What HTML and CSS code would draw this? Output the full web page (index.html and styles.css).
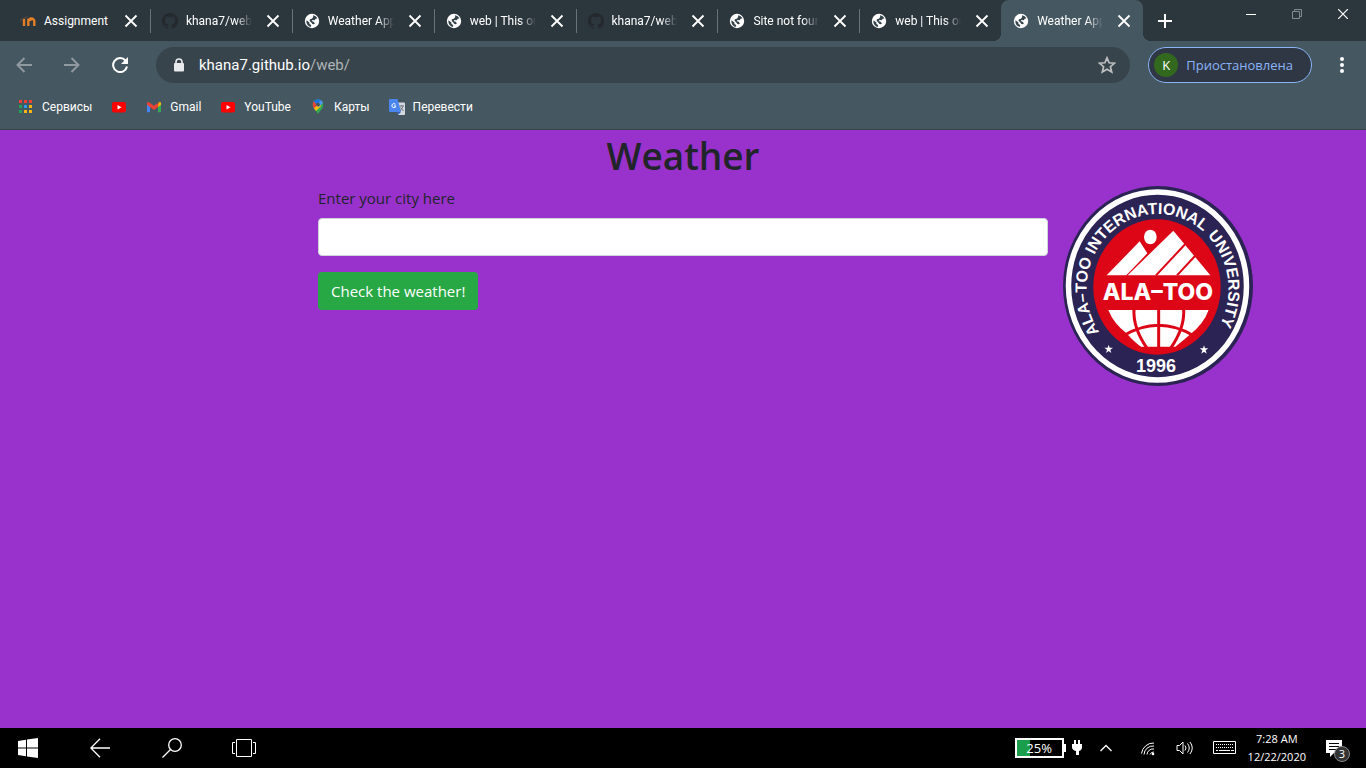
FILE: index.html
```html
<!DOCTYPE html>
<html lang="en">
<head>
<meta charset="utf-8">
<title>Weather App</title>
<link rel="stylesheet" href="styles.css">
</head>
<body>
<svg class="defs" aria-hidden="true">
  <symbol id="globe" viewBox="0 0 16 16"><circle cx="8" cy="8" r="7.200" fill="#fff"/><path class="globe-land" d="M2.500 7.200L5.400 9.600V11l1.700 1v1.800C4 13.500 1.900 10.800 2.500 7.200zM9 2.300c2 .3 3.600 1.500 4.300 3.200l-1.600.3-1 1.500-2.200-.3-.8 1 1.900.7 1.300 1.500-.9 1-1.600-.1L7.300 9.500 5.600 7.800 5.900 6.200l2-.5L9.200 4z"/></symbol>
  <symbol id="github" viewBox="0 0 16 16"><path fill="#24292e" d="M8 0C3.580 0 0 3.580 0 8c0 3.540 2.290 6.530 5.470 7.590.4.070.55-.17.55-.38v-1.340c-2.230.48-2.690-1.070-2.690-1.070-.36-.92-.89-1.170-.89-1.170-.73-.5.060-.49.060-.49.8.060 1.230.83 1.230.83.71 1.220 1.870.87 2.330.66.070-.52.280-.87.510-1.070-1.780-.2-3.640-.89-3.640-3.950 0-.87.310-1.590.82-2.150-.08-.2-.36-1.020.080-2.120 0 0 .67-.21 2.200.82a7.600 7.600 0 0 1 4 0c1.530-1.040 2.200-.82 2.200-.82.44 1.100.16 1.920.08 2.120.51.560.82 1.270.82 2.150 0 3.070-1.870 3.750-3.650 3.950.29.250.54.730.54 1.480v2.190c0 .21.15.46.55.38A8 8 0 0 0 16 8c0-4.420-3.580-8-8-8z"/></symbol>
  <symbol id="close" viewBox="0 0 14 14"><path d="M1.500 1.500l11 11m0-11l-11 11" stroke="#fff" stroke-width="1.800" fill="none"/></symbol>
  <symbol id="youtube" viewBox="0 0 16 16"><rect x="1" y="3" width="14" height="10.500" rx="2.200" fill="#f00"/><path d="M6.500 6v4.500l4-2.250z" fill="#fff"/></symbol>
</svg>

<header class="browser">
  <div class="tab-strip">
    <ul class="tabs">
      <li class="tab"><svg class="favicon" viewBox="0 0 16 16"><path d="M4 5.500V13M8.300 13V8.300a1.800 1.800 0 0 1 3.200-.8M8.300 5.800V13M8.300 8.500a3 3 0 0 1 6 0V13" fill="none" stroke="#e57f26" stroke-width="2.400"/><path d="M0 6l7-3 1 1.500-4 1.500-2 .2-1 3.300z" fill="#4a4544"/></svg><a class="tab-title" href="#">Assignment</a><button class="tab-close" aria-label="Close tab"><svg><use href="#close"/></svg></button></li>
      <li class="tab"><svg class="favicon"><use href="#github"/></svg><a class="tab-title" href="#">khana7/web: w</a><button class="tab-close" aria-label="Close tab"><svg><use href="#close"/></svg></button></li>
      <li class="tab"><svg class="favicon"><use href="#globe"/></svg><a class="tab-title" href="#">Weather App</a><button class="tab-close" aria-label="Close tab"><svg><use href="#close"/></svg></button></li>
      <li class="tab"><svg class="favicon"><use href="#globe"/></svg><a class="tab-title" href="#">web | This out</a><button class="tab-close" aria-label="Close tab"><svg><use href="#close"/></svg></button></li>
      <li class="tab"><svg class="favicon"><use href="#github"/></svg><a class="tab-title" href="#">khana7/web: w</a><button class="tab-close" aria-label="Close tab"><svg><use href="#close"/></svg></button></li>
      <li class="tab"><svg class="favicon"><use href="#globe"/></svg><a class="tab-title" href="#">Site not found</a><button class="tab-close" aria-label="Close tab"><svg><use href="#close"/></svg></button></li>
      <li class="tab"><svg class="favicon"><use href="#globe"/></svg><a class="tab-title" href="#">web | This out</a><button class="tab-close" aria-label="Close tab"><svg><use href="#close"/></svg></button></li>
      <li class="tab active"><svg class="favicon"><use href="#globe"/></svg><a class="tab-title" href="#">Weather App</a><button class="tab-close" aria-label="Close tab"><svg><use href="#close"/></svg></button></li>
    </ul>
    <button class="new-tab" aria-label="New tab"><svg width="14" height="14" viewBox="0 0 14 14"><path d="M7 0v14M0 7h14" stroke="#fff" stroke-width="2"/></svg></button>
    <div class="window-controls">
      <button aria-label="Minimize"><svg width="10" height="10"><path d="M0 5.500h10" stroke="#fff"/></svg></button>
      <button aria-label="Restore"><svg width="10" height="10" fill="none" stroke="#808a90"><path d="M.5 2.500h7v7h-7zM2.500 2.500v-2h7v7h-2"/></svg></button>
      <button aria-label="Close"><svg width="10" height="10"><path d="M0 0l10 10M10 0L0 10" stroke="#fff" stroke-width="1.200"/></svg></button>
    </div>
  </div>

  <div class="toolbar">
    <button class="nav-button" aria-label="Back"><svg width="16" height="16" viewBox="0 0 16 16"><path d="M16 8H1.500M8.500 1L1.500 8l7 7" fill="none" stroke="#8f999f" stroke-width="2"/></svg></button>
    <button class="nav-button" aria-label="Forward"><svg width="16" height="16" viewBox="0 0 16 16"><path d="M0 8h14.500M7.500 1l7 7-7 7" fill="none" stroke="#8f999f" stroke-width="2"/></svg></button>
    <button class="nav-button" aria-label="Reload"><svg width="16" height="16" viewBox="0 0 16 16"><path d="M13.500 3.500A7 7 0 1 0 15 9.500" fill="none" stroke="#fff" stroke-width="2"/><path d="M16 0v7H9z" fill="#fff"/></svg></button>
    <div class="address">
      <svg width="12" height="14" viewBox="0 0 12 14"><path d="M3 6V4a3 3 0 0 1 6 0v2" fill="none" stroke="#e8eaed" stroke-width="1.600"/><rect x="1" y="5" width="10" height="8.500" rx="1" fill="#e8eaed"/></svg>
      <a class="url" href="#">khana7.github.io<span>/web/</span></a>
      <button aria-label="Bookmark this tab"><svg width="18" height="18" viewBox="0 0 18 18"><path d="M9 1.800l2.100 5 5.400.4-4.100 3.500 1.300 5.300L9 13.200 4.300 16l1.300-5.300L1.500 7.200l5.400-.4z" fill="none" stroke="#bdbfc1" stroke-width="1.700"/></svg></button>
    </div>
    <button class="profile"><span class="avatar">K</span>Приостановлена</button>
    <button class="menu-button" aria-label="Menu"><svg width="6" height="16" fill="#fff"><circle cx="3" cy="2" r="2"/><circle cx="3" cy="8" r="2"/><circle cx="3" cy="14" r="2"/></svg></button>
  </div>

  <nav class="bookmarks">
    <a href="#"><svg viewBox="0 0 16 16"><g fill="#f04134"><path d="M1 1h3v3H1zM6 1h3v3H6zM11 1h3v3h-3z"/></g><path d="M1 6h3v3H1zM1 11h3v3H1z" fill="#25a25a"/><path d="M6 6h3v3H6z" fill="#2d9fea"/><path d="M11 6h3v3h-3zM6 11h3v3H6zM11 11h3v3h-3z" fill="#fbb70d"/></svg>Сервисы</a>
    <a href="#" aria-label="YouTube"><svg><use href="#youtube"/></svg></a>
    <a href="#"><svg viewBox="0 0 16 16"><path d="M1 4v8.500q0 .8.800.8H4V7z" fill="#4285f4"/><path d="M15 4v8.500q0 .8-.8.800H12V7z" fill="#34a853"/><path d="M12 4.300L13 3.200q2-.8 2 1.200v1.300L12 8z" fill="#fbbc04"/><path d="M1 5.700V4.400q0-2 2-1.200l5 3.600 5-3.600-1 4.800-4 3-4-3z" fill="#ea4335"/></svg>Gmail</a>
    <a href="#"><svg><use href="#youtube"/></svg>YouTube</a>
    <a href="#"><svg viewBox="0 0 16 16"><path d="M8 15.500c-.5-3-5.300-5-5.300-10A5.300 5.300 0 0 1 8 .3a5.300 5.300 0 0 1 5.300 5.200c0 5-4.800 7-5.300 10z" fill="#34a853"/><path d="M3.800 2.300L7.700 5.500 4.300 9.800Q2.700 7.800 2.700 5.300 2.800 3.600 3.800 2.300z" fill="#ea4335"/><path d="M4 9.500L9.500 3.500 11 7 6 12z" fill="#fbbc04"/><path d="M3.800 2.300Q7-1.300 11 1.200L7 6z" fill="#1a73e8"/><path d="M11 1.200q1.600 1 2 2.600L8.500 8 7 5.500z" fill="#4f90f5"/><circle cx="8" cy="5.500" r="1.900" fill="#455760"/></svg>Карты</a>
    <a href="#"><svg viewBox="0 0 16 16"><path d="M8 3.500h7.200q.8 0 .8.800v11q0 .7-.8.700H9z" fill="#d5d9df"/><path d="M0 1q0-1 1-1h7.500l3.600 13H1q-1 0-1-1z" fill="#4a86ee"/><path d="M8 13h4l-3 3z" fill="#3362bf"/><path d="M10.500 7h4.500M12.700 6v1M14 7.500q-.8 2.500-3 4M11.500 8.500l3 3.500" stroke="#637078" fill="none"/><path d="M6.400 5.300a2 2 0 1 0 .5 1.700H5" fill="none" stroke="#fff"/></svg>Перевести</a>
  </nav>
</header>

<main class="page">
  <div class="container">
    <h1>Weather</h1>
    <div class="row">
      <form class="weather-form">
        <label for="city">Enter your city here</label>
        <input id="city" type="text">
        <button type="button">Check the weather!</button>
      </form>
      <svg class="logo" viewBox="0 0 190 200" role="img" aria-label="Ala-Too International University">
        <defs><path id="ring-path" d="M37 147A71 75 0 1 1 152 147"/></defs>
        <ellipse cx="95" cy="100" rx="95" ry="100" fill="#2a2354"/>
        <ellipse cx="94.500" cy="100" rx="89" ry="94" fill="none" stroke="#fff" stroke-width="5.500"/>
        <ellipse cx="94" cy="101" rx="63.700" ry="67.700" fill="#dc0616"/>
        <g class="ring-text">
          <text><textPath href="#ring-path" startOffset="1">ALA–TOO INTERNATIONAL</textPath></text>
          <text><textPath href="#ring-path" startOffset="217">UNIVERSITY</textPath></text>
        </g>
        <g transform="translate(-8 -6) scale(.33333)" fill="#fff">
          <ellipse cx="286" cy="171" rx="19" ry="22"/>
          <path d="M155 286L254 184l23 36-63 66zM218 286L355 152l111 134z"/>
          <path d="M303 286l88-94M366 286l54-58" stroke="#dc0616" stroke-width="6"/>
          <path d="M160 390h301q-14 40-55 73-20 18-45 37H258q-20-14-42-39-40-30-56-71z"/>
          <path d="M237 386q-4 58 40 120M386 386q4 58-40 120M311 386v118M204 468q107-64 213 0" fill="none" stroke="#dc0616" stroke-width="9"/>
          <path d="M161 494l3 9h10l-8 6 3 10-8-6-8 6 3-10-8-6h10zM447 496l3 9h10l-8 6 3 10-8-6-8 6 3-10-8-6h10z"/>
        </g>
        <text class="logo-name" x="95" y="114">ALA–TOO</text>
        <text class="logo-year" x="93" y="186">1996</text>
      </svg>
    </div>
  </div>
</main>

<footer class="taskbar">
  <div class="task-buttons">
    <button aria-label="Start"><svg width="20" height="20" fill="#fff"><path d="M0 3l8-1.200V9.500H0zM9 1.600L20 0v9.500H9zM0 10.500h8v7.700L0 17zM9 10.500h11V20L9 18.400z"/></svg></button>
    <button aria-label="Back"><svg width="20" height="20" fill="none" stroke="#fff" stroke-width="1.300"><path d="M20 10H1M10 .8L.8 10l9.200 9.200"/></svg></button>
    <button aria-label="Search"><svg width="20" height="20" fill="none" stroke="#fff" stroke-width="1.300"><circle cx="13" cy="7" r="6.300"/><path d="M8.500 11.500L.5 19.500"/></svg></button>
    <button aria-label="Task view"><svg width="24" height="20" fill="none" stroke="#fff"><path d="M4.500 1.500h15v17h-15zM3 4.500H.5v11H3M21 4.500h2.500v11H21"/></svg></button>
  </div>
  <div class="tray">
    <div class="battery">25%</div>
    <svg class="plug" width="10" height="16" fill="#fff"><path d="M2 0h2v4h2V0h2v4h2v3q0 3-3 4v4H4v-4Q0 10 0 7V4h2z"/></svg>
    <button class="chevron" aria-label="Show hidden icons"><svg width="12" height="8" fill="none" stroke="#fff" stroke-width="1.300"><path d="M.5 7L6 1.500 11.500 7"/></svg></button>
    <button aria-label="Network"><svg width="14" height="16" fill="none" stroke="#fff"><path d="M.5 13.500A12 12 0 0 1 13 3M3 14.500A9 9 0 0 1 13 6M6 14.500A6 6 0 0 1 13 9M9 14.500A4 4 0 0 1 13 12"/><circle cx="12" cy="14" r="1.300" fill="#fff" stroke="none"/></svg></button>
    <button aria-label="Volume"><svg width="18" height="16" fill="none" stroke="#fff"><path d="M2 5.500h2.500l3.500-3.500v12L4.500 10.500H2zM10 5.500q2 2.500 0 5M12.500 3.500q3.500 4.500 0 9M15 2q4.500 6 0 12"/></svg></button>
    <button aria-label="Touch keyboard"><svg width="24" height="14" fill="none" stroke="#fff"><path d="M.5.5h22v12H.5z"/><path d="M3 3.500h18M3 6.500h18" stroke-dasharray="1 1"/><path d="M3 9.500h2m1 0h11m1 0h3"/></svg></button>
    <time class="clock" datetime="2020-12-22T07:28">7:28 AM<br>12/22/2020</time>
    <button class="notifications" aria-label="Notifications"><svg width="16" height="17" fill="#fff"><path d="M0 0h16v13h-8l-4 4v-4H0z"/><path d="M3 3.500h10M3 6.500h10M3 9.500h7" stroke="#000"/></svg><span class="badge">3</span></button>
  </div>
</footer>
</body>
</html>
```
FILE: styles.css
```css
* {
  box-sizing: border-box;
}

body {
  margin: 0;
  min-height: 100vh;
  display: flex;
  flex-direction: column;
  font-family: "Open Sans", "Noto Sans", sans-serif;
  background: #9932cc;
}

button {
  padding: 0;
  border: 0;
  background: none;
  color: inherit;
  font: inherit;
}

a {
  color: inherit;
  text-decoration: none;
}

svg {
  flex: none;
  display: block;
}

.defs {
  position: absolute;
  width: 0;
  height: 0;
}

/* Browser chrome */
.browser {
  background: #455760;
  border-bottom: 1px solid #38444b;
  color: #fff;
  font-family: Roboto, "Noto Sans", sans-serif;
  font-size: 12px;
}

.tab-strip {
  display: flex;
  height: 41px;
  padding-left: 8px;
  background: #2c373d;
}

.tabs {
  display: flex;
  flex: 0 1 1135px;
  min-width: 0;
  margin: 0;
  padding: 0;
  list-style: none;
}

.tab {
  display: flex;
  flex: 1 1 0;
  min-width: 0;
  align-items: center;
  padding: 0 12px;
}

.tab + .tab:not(.active) {
  background: linear-gradient(#66737a, #66737a) left center / 1px 24px no-repeat;
}

.favicon {
  width: 16px;
  height: 16px;
  margin-right: 8px;
}

.globe-land {
  fill: #344249;
}

.tab-title {
  flex: 1;
  min-width: 0;
  margin-right: 14px;
  overflow: hidden;
  white-space: nowrap;
  mask-image: linear-gradient(to right, #000 75%, transparent);
}

.tab:first-child .tab-title {
  mask-image: none;
}

.tab-close svg {
  width: 14px;
  height: 14px;
}

.tab.active {
  position: relative;
  background: #455760;
  border-radius: 8px 8px 0 0;
}

.tab.active::before,
.tab.active::after {
  content: "";
  position: absolute;
  bottom: 0;
  width: 8px;
  height: 8px;
}

.tab.active::before {
  right: 100%;
  background: radial-gradient(circle at 0 0, transparent 8px, #455760 8px);
}

.tab.active::after {
  left: 100%;
  background: radial-gradient(circle at 100% 0, transparent 8px, #455760 8px);
}

.new-tab {
  display: grid;
  place-items: center;
  width: 44px;
}

.window-controls {
  display: flex;
  height: 28px;
  margin-left: auto;
}

.window-controls button {
  display: grid;
  place-items: center;
  width: 46px;
}

.toolbar {
  display: flex;
  align-items: center;
  height: 48px;
}

.nav-button {
  display: grid;
  place-items: center;
  width: 48px;
  height: 36px;
}

.address {
  display: flex;
  flex: 1;
  align-items: center;
  height: 36px;
  margin-left: 12px;
  padding: 0 14px 0 17px;
  border-radius: 18px;
  background: #38444b;
  font-size: 15px;
}

.url {
  flex: 1;
  margin-left: 14px;
}

.url span {
  color: #aeb4b7;
}

.profile {
  display: flex;
  align-items: center;
  height: 36px;
  margin-left: 18px;
  padding: 0 18px 0 5px;
  border: 1px solid #8ab4f8;
  border-radius: 18px;
  background: #2f3744;
  color: #8ab4f8;
  font-family: "Open Sans", "Noto Sans", sans-serif;
  font-size: 13px;
}

.avatar {
  display: grid;
  place-items: center;
  width: 24px;
  height: 24px;
  margin-right: 8px;
  border-radius: 50%;
  background: #33691e;
  color: #fff;
}

.menu-button {
  display: grid;
  place-items: center;
  width: 24px;
  margin: 0 12px 0 18px;
}

.bookmarks {
  display: flex;
  gap: 19px;
  height: 40px;
  padding: 8px 18px 12px;
}

.bookmarks a {
  display: flex;
  align-items: center;
  gap: 8px;
}

.bookmarks svg {
  width: 16px;
  height: 16px;
}

/* Weather page */
.page {
  flex: 1;
  color: #212529;
}

.container {
  max-width: 1140px;
  margin: 0 auto;
}

h1 {
  margin: 0 0 4px;
  font-size: 37px;
  font-weight: 600;
  line-height: 52px;
  text-align: center;
}

.row {
  display: grid;
  grid-template-columns: 2fr 8fr 2fr;
}

.weather-form {
  grid-column: 2;
  display: flex;
  flex-direction: column;
  align-items: flex-start;
  padding: 0 15px;
  font-size: 15px;
  line-height: 24px;
}

.weather-form label {
  margin-bottom: 8px;
}

.weather-form input {
  width: 100%;
  height: 38px;
  margin-bottom: 16px;
  padding: 6px 12px;
  border: 1px solid #ced4da;
  border-radius: 4px;
  background: #fff;
  font: inherit;
}

.weather-form button {
  padding: 7px 13px;
  border-radius: 4px;
  background: #28a745;
  color: #fff;
}

.logo {
  width: 100%;
  height: auto;
}

.logo text {
  fill: #fff;
  font-family: "Liberation Sans", Arial, sans-serif;
  font-weight: 700;
}

.ring-text {
  font-size: 16px;
}

.logo-name,
.logo-year {
  text-anchor: middle;
}

.logo .logo-name {
  font-family: Inter, sans-serif;
  font-size: 23px;
  font-weight: 800;
}

.logo-year {
  font-size: 18px;
}

/* Taskbar */
.taskbar {
  display: flex;
  justify-content: space-between;
  height: 40px;
  background: #000;
  color: #fff;
  font-family: "Open Sans", "Noto Sans", sans-serif;
  font-size: 11px;
}

.task-buttons,
.tray {
  display: flex;
  align-items: center;
}

.task-buttons button {
  display: grid;
  place-items: center;
  width: 72px;
  height: 40px;
}

.task-buttons button:first-child {
  width: 56px;
  margin-right: 8px;
}

.tray {
  gap: 20px;
  padding-right: 16px;
}

.battery {
  position: relative;
  width: 49px;
  height: 20px;
  border: 2px solid #fff;
  background: linear-gradient(to right, #1b9e4b 30%, #000 30%);
  font-size: 13px;
  line-height: 16px;
  text-align: center;
}

.battery::after {
  content: "";
  position: absolute;
  top: 4px;
  left: 100%;
  width: 4px;
  height: 8px;
  background: #fff;
}

.plug {
  margin-left: -12px;
}

.chevron {
  margin: 0 9px 0 -2px;
}

.clock {
  margin-left: -9px;
  line-height: 18px;
  text-align: center;
}

.notifications {
  position: relative;
  width: 24px;
}

.badge {
  position: absolute;
  right: 0;
  top: 6px;
  width: 16px;
  height: 16px;
  border: 1px solid #888;
  border-radius: 50%;
  background: #333;
  font-size: 11px;
  line-height: 14px;
}
```
